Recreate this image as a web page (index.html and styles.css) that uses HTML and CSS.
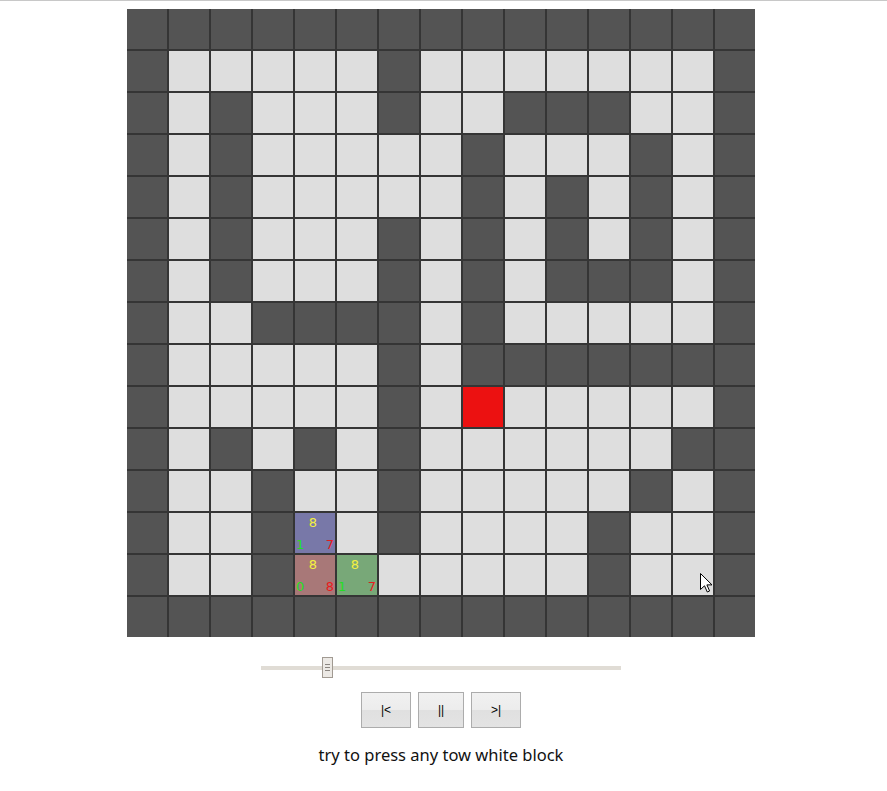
FILE: index.html
```html
<!DOCTYPE html>
<html>
<head>
<meta charset="utf-8">
<link rel="stylesheet" href="styles.css">
</head>
<body>
<div class="page">
  <div class="board">
    <div class="w"></div><div class="w"></div><div class="w"></div><div class="w"></div><div class="w"></div><div class="w"></div><div class="w"></div><div class="w"></div><div class="w"></div><div class="w"></div><div class="w"></div><div class="w"></div><div class="w"></div><div class="w"></div><div class="w"></div>
    <div class="w"></div><div class="f"></div><div class="f"></div><div class="f"></div><div class="f"></div><div class="f"></div><div class="w"></div><div class="f"></div><div class="f"></div><div class="f"></div><div class="f"></div><div class="f"></div><div class="f"></div><div class="f"></div><div class="w"></div>
    <div class="w"></div><div class="f"></div><div class="w"></div><div class="f"></div><div class="f"></div><div class="f"></div><div class="w"></div><div class="f"></div><div class="f"></div><div class="w"></div><div class="w"></div><div class="w"></div><div class="f"></div><div class="f"></div><div class="w"></div>
    <div class="w"></div><div class="f"></div><div class="w"></div><div class="f"></div><div class="f"></div><div class="f"></div><div class="f"></div><div class="f"></div><div class="w"></div><div class="f"></div><div class="f"></div><div class="f"></div><div class="w"></div><div class="f"></div><div class="w"></div>
    <div class="w"></div><div class="f"></div><div class="w"></div><div class="f"></div><div class="f"></div><div class="f"></div><div class="f"></div><div class="f"></div><div class="w"></div><div class="f"></div><div class="w"></div><div class="f"></div><div class="w"></div><div class="f"></div><div class="w"></div>
    <div class="w"></div><div class="f"></div><div class="w"></div><div class="f"></div><div class="f"></div><div class="f"></div><div class="w"></div><div class="f"></div><div class="w"></div><div class="f"></div><div class="w"></div><div class="f"></div><div class="w"></div><div class="f"></div><div class="w"></div>
    <div class="w"></div><div class="f"></div><div class="w"></div><div class="f"></div><div class="f"></div><div class="f"></div><div class="w"></div><div class="f"></div><div class="w"></div><div class="f"></div><div class="w"></div><div class="w"></div><div class="w"></div><div class="f"></div><div class="w"></div>
    <div class="w"></div><div class="f"></div><div class="f"></div><div class="w"></div><div class="w"></div><div class="w"></div><div class="w"></div><div class="f"></div><div class="w"></div><div class="f"></div><div class="f"></div><div class="f"></div><div class="f"></div><div class="f"></div><div class="w"></div>
    <div class="w"></div><div class="f"></div><div class="f"></div><div class="f"></div><div class="f"></div><div class="f"></div><div class="w"></div><div class="f"></div><div class="w"></div><div class="w"></div><div class="w"></div><div class="w"></div><div class="w"></div><div class="w"></div><div class="w"></div>
    <div class="w"></div><div class="f"></div><div class="f"></div><div class="f"></div><div class="f"></div><div class="f"></div><div class="w"></div><div class="f"></div><div class="target"></div><div class="f"></div><div class="f"></div><div class="f"></div><div class="f"></div><div class="f"></div><div class="w"></div>
    <div class="w"></div><div class="f"></div><div class="w"></div><div class="f"></div><div class="w"></div><div class="f"></div><div class="w"></div><div class="f"></div><div class="f"></div><div class="f"></div><div class="f"></div><div class="f"></div><div class="f"></div><div class="w"></div><div class="w"></div>
    <div class="w"></div><div class="f"></div><div class="f"></div><div class="w"></div><div class="f"></div><div class="f"></div><div class="w"></div><div class="f"></div><div class="f"></div><div class="f"></div><div class="f"></div><div class="f"></div><div class="w"></div><div class="f"></div><div class="w"></div>
    <div class="w"></div><div class="f"></div><div class="f"></div><div class="w"></div>
    <div class="node blue"><span class="top">8</span><span class="bottom"><span class="g">1</span><span class="r">7</span></span></div>
    <div class="f"></div><div class="w"></div><div class="f"></div><div class="f"></div><div class="f"></div><div class="f"></div><div class="w"></div><div class="f"></div><div class="f"></div><div class="w"></div>
    <div class="w"></div><div class="f"></div><div class="f"></div><div class="w"></div>
    <div class="node brown"><span class="top">8</span><span class="bottom"><span class="g">0</span><span class="r">8</span></span></div>
    <div class="node green"><span class="top">8</span><span class="bottom"><span class="g">1</span><span class="r">7</span></span></div>
    <div class="f"></div><div class="f"></div><div class="f"></div><div class="f"></div><div class="f"></div><div class="w"></div><div class="f"></div><div class="f cursor-cell"><svg class="cursor" width="13" height="20" viewBox="0 0 13 20"><path d="M0.5 0.5 L0.5 16.5 L4.5 12.8 L7.3 19 L9.6 18 L6.9 11.9 L12 11.9 Z" fill="#fff" stroke="#000" stroke-width="1" stroke-linejoin="miter"/></svg></div><div class="w"></div>
    <div class="w"></div><div class="w"></div><div class="w"></div><div class="w"></div><div class="w"></div><div class="w"></div><div class="w"></div><div class="w"></div><div class="w"></div><div class="w"></div><div class="w"></div><div class="w"></div><div class="w"></div><div class="w"></div><div class="w"></div>
  </div>

  <div class="slider">
    <div class="track"></div>
    <div class="thumb"><span></span><span></span><span></span></div>
  </div>

  <div class="buttons">
    <button class="btn wide">|&lt;</button>
    <button class="btn">||</button>
    <button class="btn wide">&gt;|</button>
  </div>

  <p class="hint">try to press any tow white block</p>
</div>
</body>
</html>
```

FILE: styles.css
```css
html, body {
  margin: 0;
  padding: 0;
  background: #fff;
}
body {
  border-top: 1px solid #c8c8c8;
  font-family: "Noto Sans", "Liberation Sans", sans-serif;
}
.page {
  width: 628px;
  margin: 8px 0 0 127px;
  display: flex;
  flex-direction: column;
  align-items: center;
}
.board {
  display: grid;
  grid-template-columns: repeat(15, 40px);
  grid-auto-rows: 40px;
  gap: 2px;
  background: #353535;
  width: 628px;
}
.w { background: #545454; }
.f { background: #dedede; }
.target { background: #ec1111; }
.node {
  display: flex;
  flex-direction: column;
  justify-content: space-between;
  font-family: "DejaVu Sans", "Liberation Sans", sans-serif;
  font-size: 13px;
  line-height: 13px;
}
.node .top {
  color: #f4f040;
  text-align: center;
  padding: 3px 4px 0 0;
}
.node .bottom {
  display: flex;
  justify-content: space-between;
  padding: 0 1px 2px 1px;
}
.node .g { color: #22e022; }
.node .r { color: #e81c1c; }
.blue { background: #7878a8; }
.brown { background: #a87878; }
.green { background: #78a878; }

.cursor-cell { position: relative; }
.cursor {
  position: absolute;
  left: 27px;
  top: 18px;
}

.slider {
  position: relative;
  width: 360px;
  height: 21px;
  margin-top: 20px;
  display: flex;
  align-items: center;
}
.track {
  width: 100%;
  height: 4px;
  background: #e0dcd5;
}
.thumb {
  position: absolute;
  left: 61px;
  top: 0;
  width: 9px;
  height: 19px;
  border: 1px solid #a19a92;
  background: #ece9e5;
  display: flex;
  flex-direction: column;
  align-items: center;
  justify-content: center;
  gap: 2px;
}
.thumb span {
  width: 5px;
  height: 1px;
  background: #8a8580;
}
.buttons {
  display: flex;
  gap: 7px;
  margin-top: 14px;
}
.btn {
  width: 46px;
  height: 36px;
  border: 1px solid #acacac;
  background: linear-gradient(#f1f1f1 0, #ececec 50%, #e0e0e0 50%, #e3e3e3 100%);
  font-family: "Liberation Sans", sans-serif;
  font-size: 12px;
  color: #000;
  padding: 0;
}
.btn.wide { width: 50px; }
.hint {
  margin: 15px 0 0 0;
  font-size: 16.5px;
  color: #111;
}
```
